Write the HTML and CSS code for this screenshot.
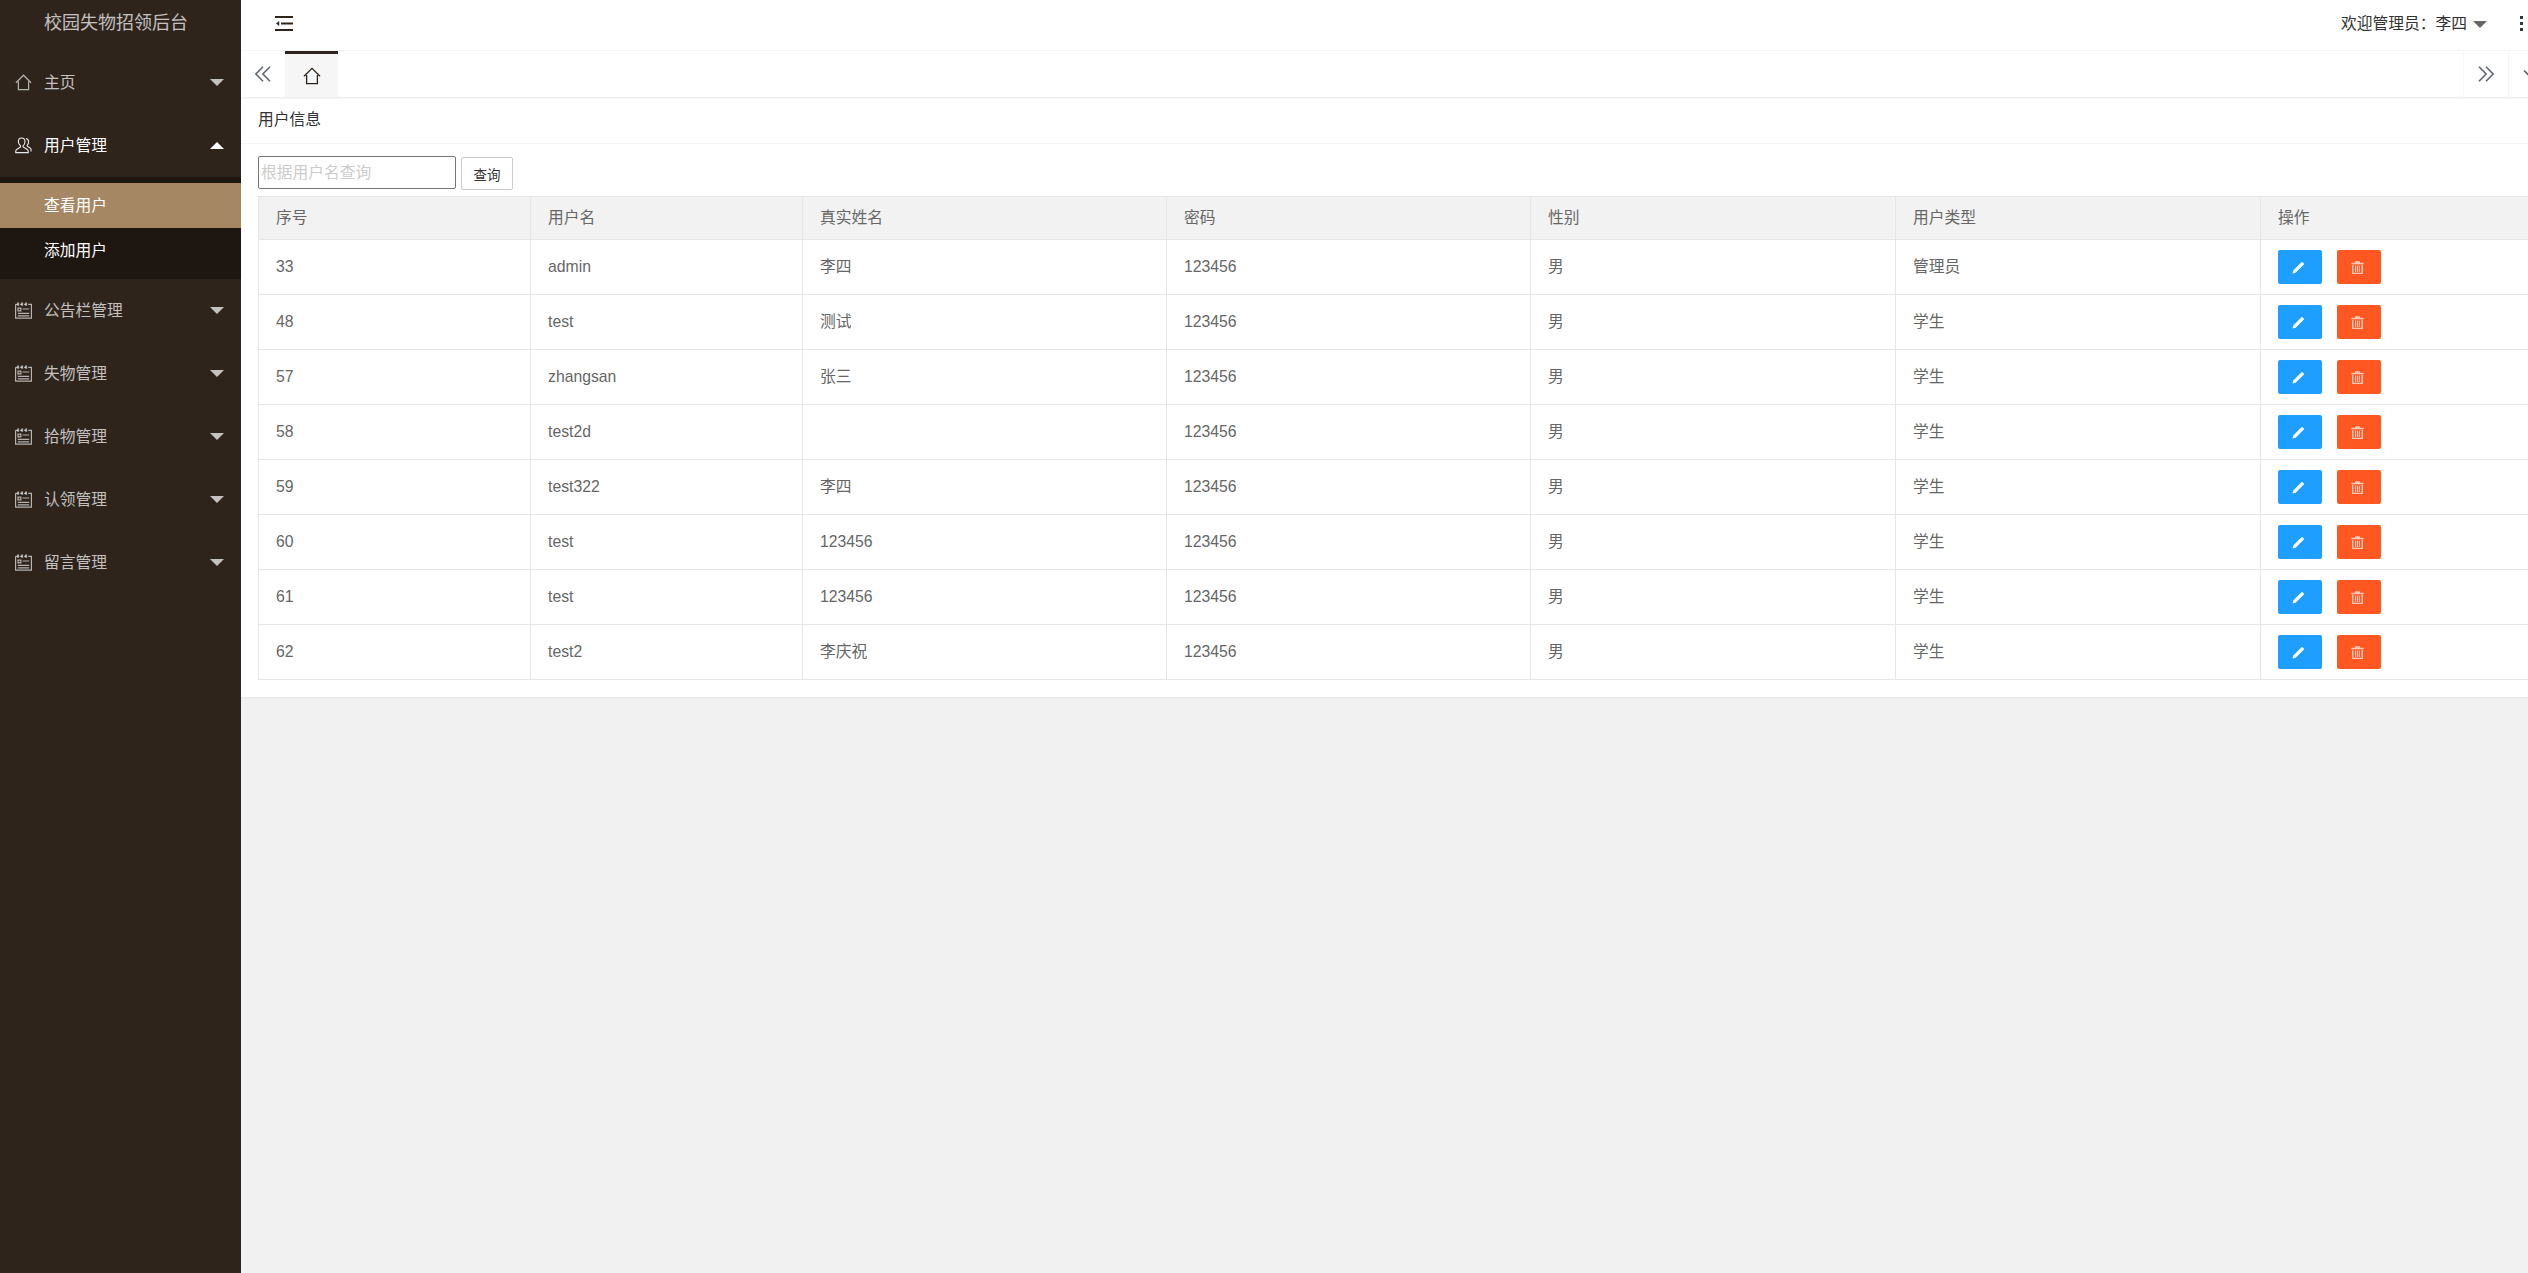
FILE: index.html
```html
<!DOCTYPE html>
<html lang="zh-CN">
<head>
    <meta charset="UTF-8">
    <title>校园失物招领后台</title>
    <link rel="stylesheet" href="styles.css">
</head>
<body>

    <!-- icons used more than once -->
    <svg class="sprite" aria-hidden="true">
        <symbol id="i-home" viewBox="0 0 18 18">
            <path d="M1 9.200 9 1.300l8 7.900M3.600 8v8.600h10.800V8" fill="none" stroke="currentColor" stroke-width="1.300"/>
        </symbol>
        <symbol id="i-note" viewBox="0 0 18 18">
            <path d="M.6 2.400h2.600M5.400 2.400h2M9.600 2.400h2M14 2.400h3.400V17H.6V2.400" fill="none" stroke="currentColor" stroke-width="1.300"/>
            <path d="M3.400.6v3.400M7.600.6v3.400M11.800.6v3.400" stroke="currentColor" stroke-width="2"/>
            <path d="M3.200 6.400h3v3h-3zM8 7.400h7M3 12h12M3 14.600h12" fill="none" stroke="currentColor" stroke-width="1.300"/>
        </symbol>
        <symbol id="i-pen" viewBox="0 0 14 14">
            <path d="M.6 13.400l.7-3.300L9.900 1.500a1.200 1.200 0 0 1 1.700 0l.9.900a1.200 1.200 0 0 1 0 1.700l-8.600 8.600z" fill="currentColor"/>
        </symbol>
        <symbol id="i-trash" viewBox="0 0 14 14">
            <path d="M.4 1.800h13.200v1.800H.4zM4.400 1.800V.2h5.200v1.600" fill="#ffc9b8"/>
            <path d="M1.900 4v9.300h10.200V4" fill="none" stroke="#ffc9b8" stroke-width="1.500"/>
            <path d="M5 5v6.800M7 5v6.800M9 5v6.800" stroke="#ffe3da" stroke-width="1"/>
        </symbol>
    </svg>

    <aside class="sidebar">
        <div class="logo">校园失物招领后台</div>
        <ul class="nav">
            <li class="nav-item">
                <svg class="nav-icon"><use href="#i-home"/></svg>主页<i class="arrow"></i>
            </li>
            <li class="nav-item open">
                <svg class="nav-icon" viewBox="0 0 18 18">
                    <path d="M6.800 1c2.400 0 3.800 1.800 3.800 4 0 1.900-.9 3.400-2 4.200v1.400l4.400 2.600c.8.500 1 1.200 1 2.200v1.200H.8v-1.200c0-1 .2-1.700 1-2.200l4-2.600V9.200c-1.100-.8-2.200-2.300-2.200-4.200 0-2.200 1-4 3.200-4z" fill="none" stroke="currentColor" stroke-width="1.200"/>
                    <path d="M11.600 1.600c1.800.3 2.800 1.800 2.800 3.600 0 1.400-.6 2.600-1.400 3.400v1.200l3 1.800c.7.400 1 1 1 1.900v1.800" fill="none" stroke="currentColor" stroke-width="1.200"/>
                </svg>用户管理<i class="arrow up"></i>
            </li>
            <li class="sub-nav">
                <div class="sub-item active">查看用户</div>
                <div class="sub-item">添加用户</div>
            </li>
            <li class="nav-item">
                <svg class="nav-icon"><use href="#i-note"/></svg>公告栏管理<i class="arrow"></i>
            </li>
            <li class="nav-item">
                <svg class="nav-icon"><use href="#i-note"/></svg>失物管理<i class="arrow"></i>
            </li>
            <li class="nav-item">
                <svg class="nav-icon"><use href="#i-note"/></svg>拾物管理<i class="arrow"></i>
            </li>
            <li class="nav-item">
                <svg class="nav-icon"><use href="#i-note"/></svg>认领管理<i class="arrow"></i>
            </li>
            <li class="nav-item">
                <svg class="nav-icon"><use href="#i-note"/></svg>留言管理<i class="arrow"></i>
            </li>
        </ul>
    </aside>

    <main class="main">
        <header class="topbar">
            <svg class="menu-toggle" viewBox="0 0 18 15">
                <path d="M0 1h18M6 7.500h12M0 14h18" fill="none" stroke="#2e241c" stroke-width="2"/>
                <path d="M1 7.500 4.200 5v5z" fill="#2e241c"/>
            </svg>
            <div class="user">欢迎管理员：李四<i class="caret"></i></div>
            <div class="dots"><i></i><i></i><i></i></div>
        </header>

        <div class="tabs">
            <div class="tab-ctrl left">
                <svg class="chev" viewBox="0 0 16 16"><path d="M8 .8.900 8 8 15.200M15 .8 7.900 8 15 15.200" fill="none" stroke="currentColor" stroke-width="1.600"/></svg>
            </div>
            <div class="tab-home"><svg class="tab-icon"><use href="#i-home"/></svg></div>
            <div class="tab-space"></div>
            <div class="tab-ctrl">
                <svg class="chev" viewBox="0 0 16 16"><path d="M1 .8 8.100 8 1 15.200M8 .8 15.100 8 8 15.200" fill="none" stroke="currentColor" stroke-width="1.600"/></svg>
            </div>
            <div class="tab-ctrl">
                <svg class="chev" viewBox="0 0 16 16"><path d="M1 4.500 8 11.500l7-7" fill="none" stroke="currentColor" stroke-width="1.600"/></svg>
            </div>
        </div>

        <section class="card">
            <div class="card-head">用户信息</div>
            <div class="card-body">
                <form class="search">
                    <input class="search-input" type="text" placeholder="根据用户名查询">
                    <button class="search-btn" type="button">查询</button>
                </form>
                <table class="data-table">
                    <colgroup>
                        <col class="c-id"><col class="c-name"><col class="c-real"><col class="c-pass">
                        <col class="c-sex"><col class="c-type"><col class="c-ops">
                    </colgroup>
                    <thead>
                        <tr><th>序号</th><th>用户名</th><th>真实姓名</th><th>密码</th><th>性别</th><th>用户类型</th><th>操作</th></tr>
                    </thead>
                    <tbody>
                        <tr><td>33</td><td>admin</td><td>李四</td><td>123456</td><td>男</td><td>管理员</td><td class="ops"><a class="btn blue"><svg><use href="#i-pen"/></svg></a><a class="btn red"><svg><use href="#i-trash"/></svg></a></td></tr>
                        <tr><td>48</td><td>test</td><td>测试</td><td>123456</td><td>男</td><td>学生</td><td class="ops"><a class="btn blue"><svg><use href="#i-pen"/></svg></a><a class="btn red"><svg><use href="#i-trash"/></svg></a></td></tr>
                        <tr><td>57</td><td>zhangsan</td><td>张三</td><td>123456</td><td>男</td><td>学生</td><td class="ops"><a class="btn blue"><svg><use href="#i-pen"/></svg></a><a class="btn red"><svg><use href="#i-trash"/></svg></a></td></tr>
                        <tr><td>58</td><td>test2d</td><td></td><td>123456</td><td>男</td><td>学生</td><td class="ops"><a class="btn blue"><svg><use href="#i-pen"/></svg></a><a class="btn red"><svg><use href="#i-trash"/></svg></a></td></tr>
                        <tr><td>59</td><td>test322</td><td>李四</td><td>123456</td><td>男</td><td>学生</td><td class="ops"><a class="btn blue"><svg><use href="#i-pen"/></svg></a><a class="btn red"><svg><use href="#i-trash"/></svg></a></td></tr>
                        <tr><td>60</td><td>test</td><td>123456</td><td>123456</td><td>男</td><td>学生</td><td class="ops"><a class="btn blue"><svg><use href="#i-pen"/></svg></a><a class="btn red"><svg><use href="#i-trash"/></svg></a></td></tr>
                        <tr><td>61</td><td>test</td><td>123456</td><td>123456</td><td>男</td><td>学生</td><td class="ops"><a class="btn blue"><svg><use href="#i-pen"/></svg></a><a class="btn red"><svg><use href="#i-trash"/></svg></a></td></tr>
                        <tr><td>62</td><td>test2</td><td>李庆祝</td><td>123456</td><td>男</td><td>学生</td><td class="ops"><a class="btn blue"><svg><use href="#i-pen"/></svg></a><a class="btn red"><svg><use href="#i-trash"/></svg></a></td></tr>
                    </tbody>
                </table>
            </div>
        </section>
    </main>

</body>
</html>
```

FILE: styles.css
```css
* {
    box-sizing: border-box;
}

html, body {
    height: 100%;
    margin: 0;
    overflow: hidden;
}

body {
    display: flex;
    font-family: "Liberation Sans", "Noto Sans CJK SC", sans-serif;
    font-size: 15.75px;
    line-height: 20px;
    color: #666;
    background-color: #f1f1f1;
}

.sprite {
    display: none;
}

/* Sidebar */
.sidebar {
    flex: 0 0 241px;
    background-color: #2e241c;
    color: rgba(255, 255, 255, 0.72);
}

.logo {
    height: 51px;
    padding-left: 44px;
    font-size: 18px;
    line-height: 46px;
}

.nav {
    list-style: none;
    margin: 0;
    padding: 0;
}

.nav-item {
    display: flex;
    align-items: center;
    height: 63px;
    padding-left: 15px;
}

.nav-item.open {
    color: #fff;
}

.nav-icon {
    flex: none;
    width: 17px;
    height: 17px;
    margin-right: 12px;
    opacity: 0.9;
}

.arrow {
    width: 0;
    height: 0;
    margin-left: auto;
    margin-right: 17px;
    border-style: solid;
    border-width: 7px 7px 0;
    border-color: currentColor transparent transparent;
}

.arrow.up {
    border-width: 0 7px 7px;
    border-color: transparent transparent currentColor;
}

.sub-nav {
    padding: 6px 0 6px;
    background-color: #1e1611;
    color: #fff;
}

.sub-item {
    height: 45px;
    padding-left: 44px;
    line-height: 45px;
}

.sub-item.active {
    background-color: #a58763;
}

/* Right side */
.main {
    flex: 1;
    min-width: 0;
    overflow: hidden;
}

.topbar {
    display: flex;
    align-items: center;
    height: 51px;
    padding: 0 0 3px 34px;
    background-color: #fff;
    border-bottom: 1px solid #f6f6f6;
}

.menu-toggle {
    width: 18px;
    height: 15px;
}

.user {
    display: flex;
    align-items: center;
    margin-left: auto;
    color: #333;
}

.caret {
    margin: 2px 0 0 6px;
    border-style: solid;
    border-width: 7px 7px 0;
    border-color: #666 transparent transparent;
}

.dots {
    display: flex;
    flex-direction: column;
    gap: 3px;
    margin: 0 5px 0 33px;
}

.dots i {
    width: 3px;
    height: 3px;
    background-color: #2e3a4a;
}

.tabs {
    display: flex;
    height: 46px;
    margin-right: -25px;
    background-color: #fff;
    box-shadow: 0 1px 2px rgba(0, 0, 0, 0.1);
    position: relative;
}

.tab-ctrl {
    display: flex;
    align-items: center;
    justify-content: center;
    width: 45px;
    border-left: 1px solid #f6f6f6;
    color: #5f6670;
}

.tab-ctrl.left {
    width: 44px;
    border-left: 0;
}

.chev {
    width: 16px;
    height: 16px;
}

.tab-home {
    display: flex;
    align-items: center;
    justify-content: center;
    width: 53px;
    border-top: 3px solid #2e241c;
    background-color: #f6f6f6;
    color: #2e241c;
}

.tab-icon {
    width: 18px;
    height: 18px;
}

.tab-space {
    flex: 1;
}

.card {
    background-color: #fff;
    box-shadow: 0 1px 2px rgba(0, 0, 0, 0.05);
}

.card-head {
    height: 47px;
    padding-left: 17px;
    line-height: 46px;
    color: #333;
    border-bottom: 1px solid #f6f6f6;
}

.card-body {
    padding: 12px 0 17px 17px;
}

.search {
    display: flex;
    align-items: flex-start;
    gap: 5px;
    height: 40px;
}

.search-input {
    width: 198px;
    height: 33px;
    padding: 0 2px;
    font: inherit;
    border: 1px solid #767676;
    border-radius: 2px;
}

.search-input::placeholder {
    color: #ccc;
}

.search-btn {
    width: 52px;
    height: 33px;
    margin-top: 1px;
    padding: 0;
    font-family: inherit;
    font-size: 13.5px;
    color: #333;
    background-color: #fff;
    border: 1px solid #ccc;
    border-radius: 2px;
}

.data-table {
    table-layout: fixed;
    width: 2367px;
    border-collapse: collapse;
}

.c-id, .c-name {
    width: 272px;
}

.c-real, .c-pass {
    width: 364px;
}

.c-sex, .c-type, .c-ops {
    width: 365px;
}

.data-table th, .data-table td {
    padding: 0 0 0 17px;
    text-align: left;
    font-weight: normal;
    border: 1px solid #e6e6e6;
}

.data-table th {
    height: 43px;
    background-color: #f2f2f2;
}

.data-table td {
    height: 55px;
}

.btn {
    display: inline-flex;
    align-items: center;
    justify-content: center;
    width: 44px;
    height: 34px;
    margin-right: 15px;
    padding-right: 3px;
    border-radius: 2px;
    vertical-align: middle;
    color: #fff;
}

.btn svg {
    width: 13px;
    height: 13px;
}

.btn.blue {
    background-color: #1e9fff;
}

.btn.red {
    background-color: #ff5722;
}
```
